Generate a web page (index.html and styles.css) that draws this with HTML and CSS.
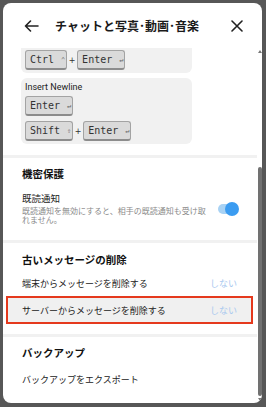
FILE: index.html
```html
<!DOCTYPE html>
<html lang="ja">
<head>
<meta charset="utf-8">
<link rel="stylesheet" href="styles.css">
</head>
<body>
<div class="dialog">
  <div class="header">
    <svg class="back" width="15" height="12" viewBox="0 0 15 12"><path d="M14 6H1.5M6.5 1L1.5 6l5 5" fill="none" stroke="#222" stroke-width="1.6" stroke-linecap="round" stroke-linejoin="round"/></svg>
    <div class="title">チャットと写真･動画･音楽</div>
    <svg class="close" width="12" height="12" viewBox="0 0 12 12"><path d="M1 1l10 10M11 1L1 11" fill="none" stroke="#222" stroke-width="1.6" stroke-linecap="round"/></svg>
  </div>
  <div class="body">
    <div class="content">
      <div class="shortcuts">
        <div class="card card-first">
          <div class="combo">
            <span class="key">Ctrl <span class="sym">⌃</span></span><span class="plus">+</span><span class="key">Enter <span class="sym">↵</span></span>
          </div>
        </div>
        <div class="card">
          <div class="card-label">Insert Newline</div>
          <div class="combo">
            <span class="key">Enter <span class="sym">↵</span></span>
          </div>
          <div class="combo">
            <span class="key">Shift <span class="sym">⇧</span></span><span class="plus">+</span><span class="key">Enter <span class="sym">↵</span></span>
          </div>
        </div>
      </div>
      <div class="divider"></div>
      <div class="section section-privacy">
        <div class="heading">機密保護</div>
        <div class="toggle-row">
          <div class="toggle-text">
            <div class="row-title">既読通知</div>
            <div class="row-desc">既読通知を無効にすると、相手の既読通知も受け取れません。</div>
          </div>
          <div class="toggle"><div class="knob"></div></div>
        </div>
      </div>
      <div class="divider"></div>
      <div class="section section-old">
        <div class="heading">古いメッセージの削除</div>
        <div class="row row-first">
          <span>端末からメッセージを削除する</span><span class="value">しない</span>
        </div>
        <div class="row row-marked">
          <span>サーバーからメッセージを削除する</span><span class="value">しない</span>
        </div>
      </div>
      <div class="divider"></div>
      <div class="section section-backup">
        <div class="heading">バックアップ</div>
        <div class="row row-backup"><span>バックアップをエクスポート</span></div>
      </div>
    </div>
    <div class="scrollbar">
      <div class="arrow arrow-up"></div>
      <div class="track"><div class="thumb"></div></div>
      <div class="arrow arrow-down"></div>
    </div>
  </div>
</div>
</body>
</html>
```
FILE: styles.css
```css
* { box-sizing: border-box; }
html, body { margin: 0; padding: 0; }
body {
  background: #575757;
  width: 266px;
  height: 407px;
  overflow: hidden;
  padding: 3px 4px 4px 3px;
  font-family: Roboto, "Noto Sans CJK JP", sans-serif;
  color: #222;
}
.dialog {
  width: 259px;
  height: 400px;
  background: #fff;
  border-radius: 8px;
  overflow: hidden;
  display: flex;
  flex-direction: column;
}
.header {
  height: 45px;
  flex: none;
  display: flex;
  align-items: center;
  padding: 0 19px 0 21px;
}
.back { flex: none; }
.title {
  margin-left: 16px;
  flex: 1;
  font-family: "Noto Sans CJK JP", sans-serif;
  font-weight: 700;
  font-size: 12px;
  color: #1a1a1a;
  white-space: nowrap;
}
.close { flex: none; }
.body {
  flex: 1;
  min-height: 0;
  display: flex;
}
.content {
  flex: 1;
  min-width: 0;
  overflow: hidden;
}
.shortcuts { padding: 0 0 11px 18px; }
.card {
  width: 171px;
  background: #f1f1f1;
  border-radius: 6px;
  padding: 3px 4px 3px;
  display: flex;
  flex-direction: column;
  gap: 5px;
}
.card-first { padding-top: 2px; border-radius: 0 0 6px 6px; margin-bottom: 5px; }
.card-label {
  font-size: 9px;
  line-height: 13px;
  color: #222;
  margin-bottom: -3px;
}
.combo { display: flex; align-items: center; }
.key {
  display: inline-flex;
  align-items: center;
  height: 20px;
  padding: 0 0 0 4px;
  background: #dadada;
  border: 1px solid #a3a3a3;
  border-bottom: 2px solid #8c8c8c;
  border-radius: 3px;
  font-family: "DejaVu Sans Mono", monospace;
  font-size: 10px;
  color: #333;
  white-space: pre;
}
.sym {
  display: inline-block;
  width: 6px;
  text-align: center;
  font-size: 7px;
  color: #666;
}
.plus {
  font-family: "DejaVu Sans", sans-serif;
  font-size: 8px;
  color: #333;
  width: 10px;
  text-align: center;
}
.divider { height: 3px; background: #f1f1f1; }
.section { padding-left: 19px; padding-right: 20px; }
.heading {
  font-family: "Noto Sans CJK JP", sans-serif;
  font-weight: 700;
  font-size: 10.5px;
  line-height: 16px;
  color: #111;
}
.section-privacy { padding-top: 8px; padding-bottom: 16px; padding-right: 18px; }
.section-old { padding-top: 9px; padding-bottom: 10px; }
.section-backup { padding-top: 8px; }
.toggle-row {
  margin-top: 10px;
  display: flex;
  align-items: center;
  justify-content: space-between;
}
.toggle-text { width: 184px; flex: none; }
.row-title {
  font-family: "Noto Sans CJK JP", sans-serif;
  font-size: 9.5px;
  line-height: 13px;
  color: #222;
}
.row-desc {
  font-family: "Noto Sans CJK JP", sans-serif;
  font-size: 8px;
  line-height: 9px;
  color: #8a8a8a;
  margin-top: 1px;
}
.toggle {
  width: 21px;
  height: 14px;
  position: relative;
  margin-top: 2px;
}
.toggle::before {
  content: "";
  position: absolute;
  left: 0; top: 2px;
  width: 19px; height: 10px;
  border-radius: 5px;
  background: #a8d2f4;
}
.knob {
  position: absolute;
  right: 0; top: 0;
  width: 14px; height: 14px;
  border-radius: 50%;
  background: #3b9cf1;
}
.row {
  display: flex;
  align-items: center;
  justify-content: space-between;
  height: 26px;
  font-family: "Noto Sans CJK JP", sans-serif;
  font-size: 9px;
  color: #222;
}
.row-first { margin-top: 2px; }
.value { color: #a9c9ef; }
.row-marked {
  height: 28px;
  margin: 0 -16px 0 -16px;
  padding: 0 14px;
  background: #f0f0f0;
  border: 2px solid #e5391d;
}
.row-backup { margin-top: 5px; }
.scrollbar {
  width: 5px;
  flex: none;
  display: flex;
  flex-direction: column;
  align-items: center;
}
.arrow { flex: none; width: 0; }
.arrow-up {
  margin-top: 2px;
  height: 0;
  border-left: 2px solid transparent;
  border-right: 2px solid transparent;
  border-bottom: 3px solid #777;
  margin-bottom: 3px;
}
.track { flex: 1; width: 4px; }
.thumb {
  margin-top: 111px;
  height: 229px;
  width: 4px;
  border-radius: 2px;
  background: #717171;
}
.arrow-down {
  height: 0;
  margin-top: 2px;
  margin-bottom: 3px;
  border-left: 2px solid transparent;
  border-right: 2px solid transparent;
  border-top: 3px solid #777;
}
```
